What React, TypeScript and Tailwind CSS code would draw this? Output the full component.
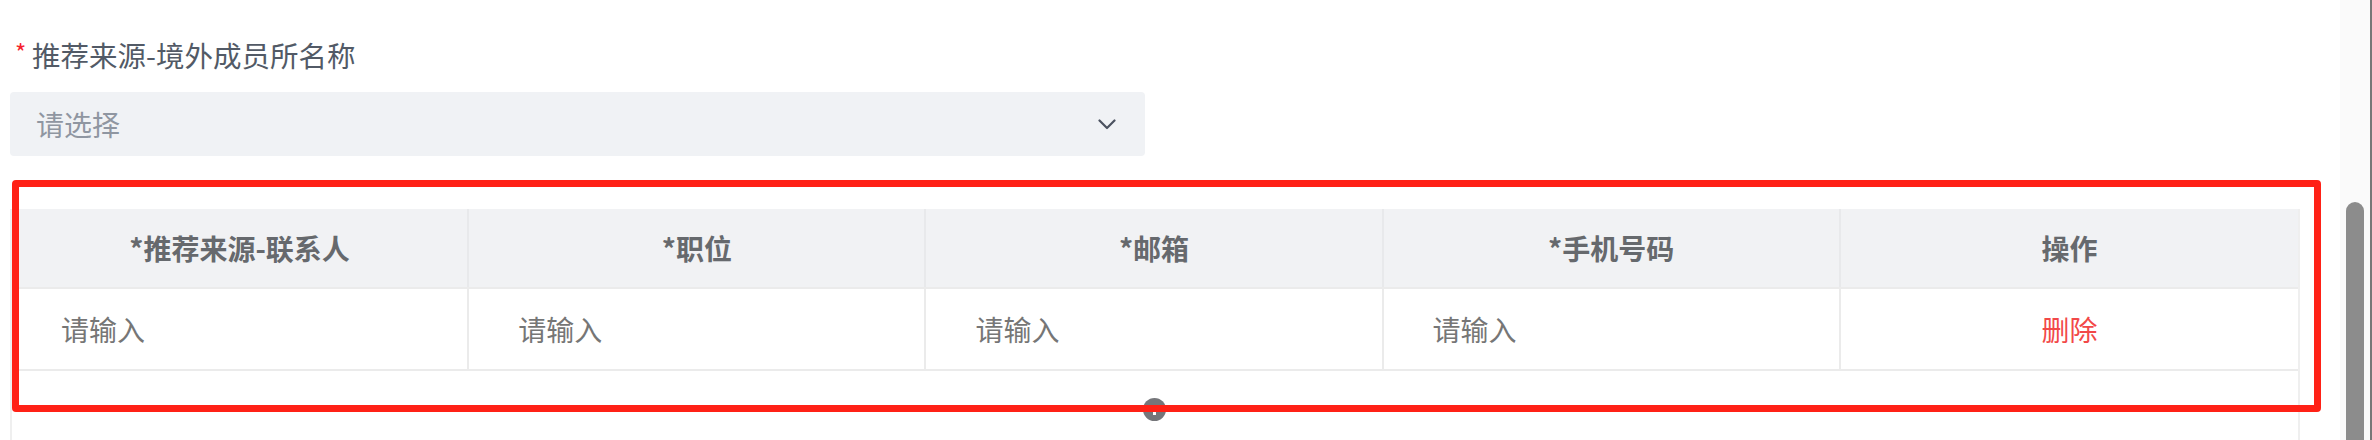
import React from "react";

const cols = ["*推荐来源-联系人", "*职位", "*邮箱", "*手机号码", "操作"];

export default function App() {
  return (
    <div
      className="flex h-[440px] w-[2372px] overflow-hidden bg-white"
      style={{ fontFamily: '"Noto Sans CJK SC", "Noto Sans", sans-serif' }}
    >
      <main className="relative flex-1 pl-[10px]">
        {/* label */}
        <div className="flex items-center pt-[35px] pl-[5px] h-[75px] leading-[40px]">
          <span className="inline-block w-[17px] text-[24px] text-[#f5222d] leading-none -mt-[6px]">*</span>
          <span className="text-[28.5px] text-[#525a66]">推荐来源-境外成员所名称</span>
        </div>

        {/* select */}
        <div className="mt-[17px] flex h-[64px] w-[1135px] items-center justify-between rounded-[4px] bg-[#f0f2f5] pl-[26px] pr-[29px]">
          <span className="text-[28px] text-[#8f96a1]">请选择</span>
          <svg width="18" height="11" viewBox="0 0 18 11" fill="none">
            <polyline points="1.5,1.5 9,9 16.5,1.5" stroke="#4b5260" strokeWidth="2.2" strokeLinecap="round" strokeLinejoin="round" />
          </svg>
        </div>

        {/* table */}
        <div className="mt-[53px] w-[2290px] h-[300px] border-l-2 border-r-2 border-[#efefef]">
          <div className="grid grid-cols-5 h-[80px] bg-[#f1f2f4] border-b-2 border-[#ebebeb]">
            {cols.map((c, i) => (
              <div
                key={c}
                className={`flex items-center justify-center text-[28px] font-bold text-[#66696d] ${i < 4 ? "border-r-2 border-[#e8e9eb]" : ""}`}
              >
                {c}
              </div>
            ))}
          </div>
          <div className="grid grid-cols-5 h-[82px] border-b-2 border-[#ebebeb]">
            {[0, 1, 2, 3].map((i) => (
              <div key={i} className="flex items-center pl-[49px] border-r-2 border-[#ebebeb] text-[28px] text-[#767676]">
                请输入
              </div>
            ))}
            <div className="flex items-center justify-center text-[28px] text-[#f24848]">删除</div>
          </div>
        </div>

        {/* small handle */}
        <div className="absolute left-[1143px] top-[398px] flex h-[23px] w-[23px] items-end justify-center rounded-full bg-[#75767a] pb-[6px]">
          <div className="h-[6px] w-[3px] bg-white" />
        </div>

        {/* red annotation */}
        <div className="absolute left-[12px] top-[180px] h-[232px] w-[2309px] rounded-[4px] border-[7px] border-[#ff2116]" />
      </main>

      {/* scrollbar */}
      <div className="flex w-[32px] bg-[#fafafa]">
        <div className="w-[30px] pl-[6px] pt-[202px]">
          <div className="h-[300px] w-[18px] rounded-full bg-[#8c8c8c]" />
        </div>
        <div className="w-[2px] bg-[#777777]" />
      </div>
    </div>
  );
}
